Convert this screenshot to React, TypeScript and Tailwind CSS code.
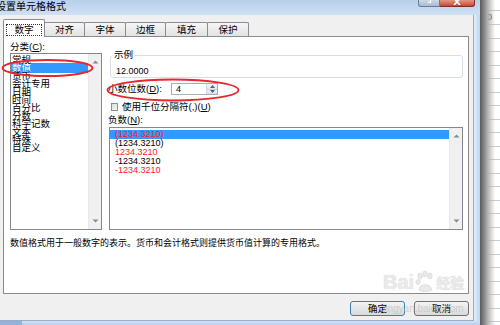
import React from "react";

const cats = ["常规", "数值", "货币", "会计专用", "日期", "时间", "百分比", "分数", "科学记数", "文本", "特殊", "自定义"];
const negs = [
  { t: "(1234.3210)", red: true, sel: true },
  { t: "(1234.3210)", red: false, sel: false },
  { t: "1234.3210", red: true, sel: false },
  { t: "-1234.3210", red: false, sel: false },
  { t: "-1234.3210", red: true, sel: false },
];
const tabs = [
  { t: "对齐", w: "w-[41px]" },
  { t: "字体", w: "w-[42px]" },
  { t: "边框", w: "w-[41px]" },
  { t: "填充", w: "w-[43px]" },
  { t: "保护", w: "w-[42px]" },
];

function UpArrow() {
  return (
    <svg width="7" height="4" viewBox="0 0 7 4">
      <path d="M0.5 3.5 L3.5 0.5 L6.5 3.5 Z" fill="#8a8a8a" />
    </svg>
  );
}
function DownArrow() {
  return (
    <svg width="7" height="4" viewBox="0 0 7 4">
      <path d="M0.5 0.5 L3.5 3.5 L6.5 0.5 Z" fill="#8a8a8a" />
    </svg>
  );
}

function ScrollBar() {
  return (
    <div className="w-[13px] h-full bg-[#f0f0f0] border-l border-[#e8e8e8] flex flex-col items-center justify-between pt-[6px] pb-[6px]">
      <UpArrow />
      <DownArrow />
    </div>
  );
}

export default function App() {
  return (
    <div className="relative w-[500px] h-[325px] overflow-hidden flex bg-white text-black font-['Liberation_Sans','Noto_Sans_CJK_SC',sans-serif]">
      {/* dialog window */}
      <div className="w-[480px] h-full flex flex-col bg-[#c3d9f1]">
        {/* title bar */}
        <div className="h-[15px] flex items-start bg-gradient-to-b from-[#b9d0ea] to-[#cfe0f3]">
          <span className="ml-[-4px] mt-[2px] text-[10px] leading-[10px] whitespace-nowrap">设置单元格格式</span>
          <div className="flex-1" />
          <div className="flex mr-[5px]">
            <div className="w-[22px] h-[7px] rounded-bl-[3px] border border-t-0 border-[#6b7d93] bg-gradient-to-b from-[#cdd9e6] to-[#a9bcd3] flex justify-center items-start">
              <div className="w-[3px] h-[3px] border-r border-b border-white mt-[0px]" />
            </div>
            <div className="w-[35px] h-[7px] rounded-br-[3px] border border-t-0 border-l-0 border-[#7a3326] bg-gradient-to-b from-[#e49585] to-[#c8452f] flex justify-center items-start">
              <svg width="10" height="5" viewBox="0 0 10 5">
                <path d="M1 -3 L5 2 L9 -3 M5 2 L2 5 M5 2 L8 5" stroke="#ffffff" strokeWidth="1.6" fill="none" />
              </svg>
            </div>
          </div>
        </div>

        {/* body row */}
        <div className="flex-1 flex min-h-0">
          <div className="w-[474px] h-full bg-[#f0f0f0] border-r border-b border-[#9aabc2] flex flex-col">
            {/* tab strip */}
            <div className="mt-[4px] h-[17px] pl-[3px] flex items-end">
              <div className="relative z-10 w-[42px] h-[18px] mb-[-1px] bg-white border border-b-0 border-[#898c95] rounded-t-[2px] flex items-center justify-center">
                <span className="mt-[2px] w-[36px] h-[12px] border border-dotted border-[#333] flex items-center justify-center text-[9.5px] leading-[10px]">
                  数字
                </span>
              </div>
              {tabs.map((tb) => (
                <div
                  key={tb.t}
                  className={`${tb.w} -ml-px h-[14px] border border-b-0 border-[#898c95] rounded-t-[2px] bg-gradient-to-b from-[#f6f6f6] to-[#e2e2e2] flex items-center justify-center text-[9.5px] leading-[10px]`}
                >
                  {tb.t}
                </div>
              ))}
            </div>

            {/* panel */}
            <div className="ml-[3px] w-[466px] h-[258px] bg-white border border-[#898c95] flex flex-col">
              <div className="flex items-start">
                {/* left column */}
                <div className="ml-[6px] w-[92px] flex flex-col">
                  <div className="mt-[5px] h-[10px] leading-[10px] text-[9.5px] whitespace-nowrap">
                    分类(<u>C</u>):
                  </div>
                  <div className="mt-[1px] h-[177px] border border-[#828790] flex bg-white">
                    <div className="flex-1 overflow-hidden pt-[2px]">
                      {cats.map((c, i) =>
                        i === 1 ? (
                          <div key={c} className="h-[10px] -my-px py-px leading-[8px] text-[9.5px] pl-[1px] bg-[#3399ff] text-white whitespace-nowrap">
                            {c}
                          </div>
                        ) : (
                          <div key={c} className="h-[8px] leading-[8px] text-[9.5px] pl-[1px] whitespace-nowrap">
                            {c}
                          </div>
                        )
                      )}
                    </div>
                    <ScrollBar />
                  </div>
                </div>

                {/* right column */}
                <div className="ml-[6px] w-[355px] flex flex-col">
                  <div className="relative mt-[18px] ml-[2px] w-[353px] h-[23px] border border-[#d5dfe5] rounded-[3px] pl-[5px] pt-[10px]">
                    <span className="absolute left-[2px] top-[-6px] bg-white px-px text-[9.5px] leading-[10px]">示例</span>
                    <div className="text-[9px] leading-[10px]">12.0000</div>
                  </div>

                  <div className="mt-[5px] h-[12px] flex items-center">
                    <div className="w-[63px] text-[9.5px] leading-[10px] whitespace-nowrap">
                      小数位数(<u>D</u>):
                    </div>
                    <div className="w-[47px] h-[12px] border border-[#abadb3] bg-white flex">
                      <div className="flex-1 pl-[4px] text-[9px] leading-[10px]">4</div>
                      <div className="w-[11px] h-full flex flex-col border-l border-[#d0d7e2]">
                        <div className="flex-1 bg-gradient-to-b from-[#f4f7fb] to-[#dfe6ef] flex items-center justify-center border-b border-[#c9d1dc]">
                          <svg width="5" height="3" viewBox="0 0 5 3"><path d="M0 3 L2.5 0 L5 3 Z" fill="#4d6185" /></svg>
                        </div>
                        <div className="flex-1 bg-gradient-to-b from-[#eef2f7] to-[#dbe2ec] flex items-center justify-center">
                          <svg width="5" height="3" viewBox="0 0 5 3"><path d="M0 0 L2.5 3 L5 0 Z" fill="#4d6185" /></svg>
                        </div>
                      </div>
                    </div>
                  </div>

                  <div className="mt-[8px] h-[8px] ml-[3px] flex items-center">
                    <div className="w-[7px] h-[8px] border border-[#8e8f8f] bg-gradient-to-br from-[#dcdcdc] to-[#f8f8f8]" />
                    <span className="ml-[4px] text-[9.5px] leading-[10px] whitespace-nowrap">
                      使用千位分隔符(,)(<u>U</u>)
                    </span>
                  </div>

                  <div className="mt-[4px] h-[10px] leading-[10px] text-[9.5px] whitespace-nowrap">
                    负数(<u>N</u>):
                  </div>

                  <div className="mt-[2px] ml-[1px] w-[354px] h-[103px] border border-[#828790] flex bg-white">
                    <div className="flex-1 overflow-hidden pt-[2px]">
                      {negs.map((n, i) => (
                        <div
                          key={i}
                          className={`h-[9px] leading-[9px] text-[9px] pl-[5px] whitespace-nowrap ${n.sel ? "bg-[#3399ff]" : ""} ${n.red ? "text-[#ff1a1a]" : "text-black"}`}
                        >
                          {n.t}
                        </div>
                      ))}
                    </div>
                    <ScrollBar />
                  </div>
                </div>
              </div>

              <div className="mt-[8px] ml-[6px] text-[9px] leading-[10px] whitespace-nowrap">
                数值格式用于一般数字的表示。货币和会计格式则提供货币值计算的专用格式。
              </div>
            </div>

            {/* buttons */}
            <div className="mt-[7px] h-[15px] flex justify-end pr-[4px] gap-[9px]">
              <div className="w-[55px] h-[15px] rounded-[3px] border border-[#3c7fb1] bg-gradient-to-b from-[#f4f4f4] to-[#d9d9d9] flex items-center justify-center text-[9.5px] leading-[10px]">
                确定
              </div>
              <div className="w-[55px] h-[15px] rounded-[3px] border border-[#707070] bg-gradient-to-b from-[#f4f4f4] to-[#d9d9d9] flex items-center justify-center text-[9.5px] leading-[10px]">
                取消
              </div>
            </div>
          </div>
          {/* right frame */}
          <div className="flex-1 h-full bg-gradient-to-r from-[#e4eefa] to-[#b9d5f3]" />
        </div>
        {/* bottom frame */}
        <div className="h-[4px] flex">
          <div className="w-[22px] bg-[#8fb3dc]" />
          <div className="flex-1 bg-gradient-to-b from-[#cfe1f5] to-[#b7d0ec]" />
        </div>
      </div>

      {/* excel behind */}
      <div className="relative flex-1 h-full bg-white flex flex-col">
        <div className="h-[11px] border-b border-[#c4ccd8]" />
        <div className="h-[14px] border-b border-[#c4ccd8] pl-[2px] text-[9px] leading-[12px]">00</div>
        {Array.from({ length: 22 }).map((_, i) => (
          <div key={i} className="h-[13.5px] shrink-0 border-b border-[#c4ccd8]" />
        ))}
        <div className="absolute inset-y-0 left-0 w-[15px] bg-gradient-to-r from-[#5a5a5a] via-[#b0b0b0] to-transparent pointer-events-none" />
      </div>

      {/* Baidu watermark */}
      <div className="absolute left-[383px] top-[270px] flex items-end pointer-events-none opacity-70">
        <span className="text-[20px] leading-[20px] font-bold text-[#e2e2e2] [text-shadow:0_0_1px_#b8b8b8]">Bai</span>
        <svg width="20" height="22" viewBox="0 0 20 22" className="mx-[1px]">
          <g fill="#e2e2e2" stroke="#c0c0c0" strokeWidth="0.6">
            <ellipse cx="5" cy="6" rx="2.2" ry="3" />
            <ellipse cx="10" cy="4" rx="2.2" ry="3" />
            <ellipse cx="15" cy="6" rx="2.2" ry="3" />
            <ellipse cx="3" cy="12" rx="2" ry="2.6" />
            <path d="M4 20 C4 13 16 13 17 20 C13 22 8 22 4 20 Z" />
          </g>
        </svg>
        <span className="text-[14px] leading-[18px] font-bold text-[#e2e2e2] [text-shadow:0_0_1px_#b8b8b8]">经验</span>
      </div>
      <div className="absolute left-[383px] top-[304px] text-[10px] leading-[10px] text-[#bdbdbd] opacity-60 pointer-events-none">
        jingyan.baidu.com
      </div>

      {/* red annotation ellipses */}
      <svg className="absolute inset-0 pointer-events-none" width="500" height="325" viewBox="0 0 500 325">
        <ellipse cx="47.5" cy="68" rx="45" ry="8" fill="none" stroke="#e8262b" strokeWidth="2" />
        <ellipse cx="173" cy="90" rx="65.5" ry="10.5" fill="none" stroke="#e8262b" strokeWidth="1.8" />
      </svg>
    </div>
  );
}
